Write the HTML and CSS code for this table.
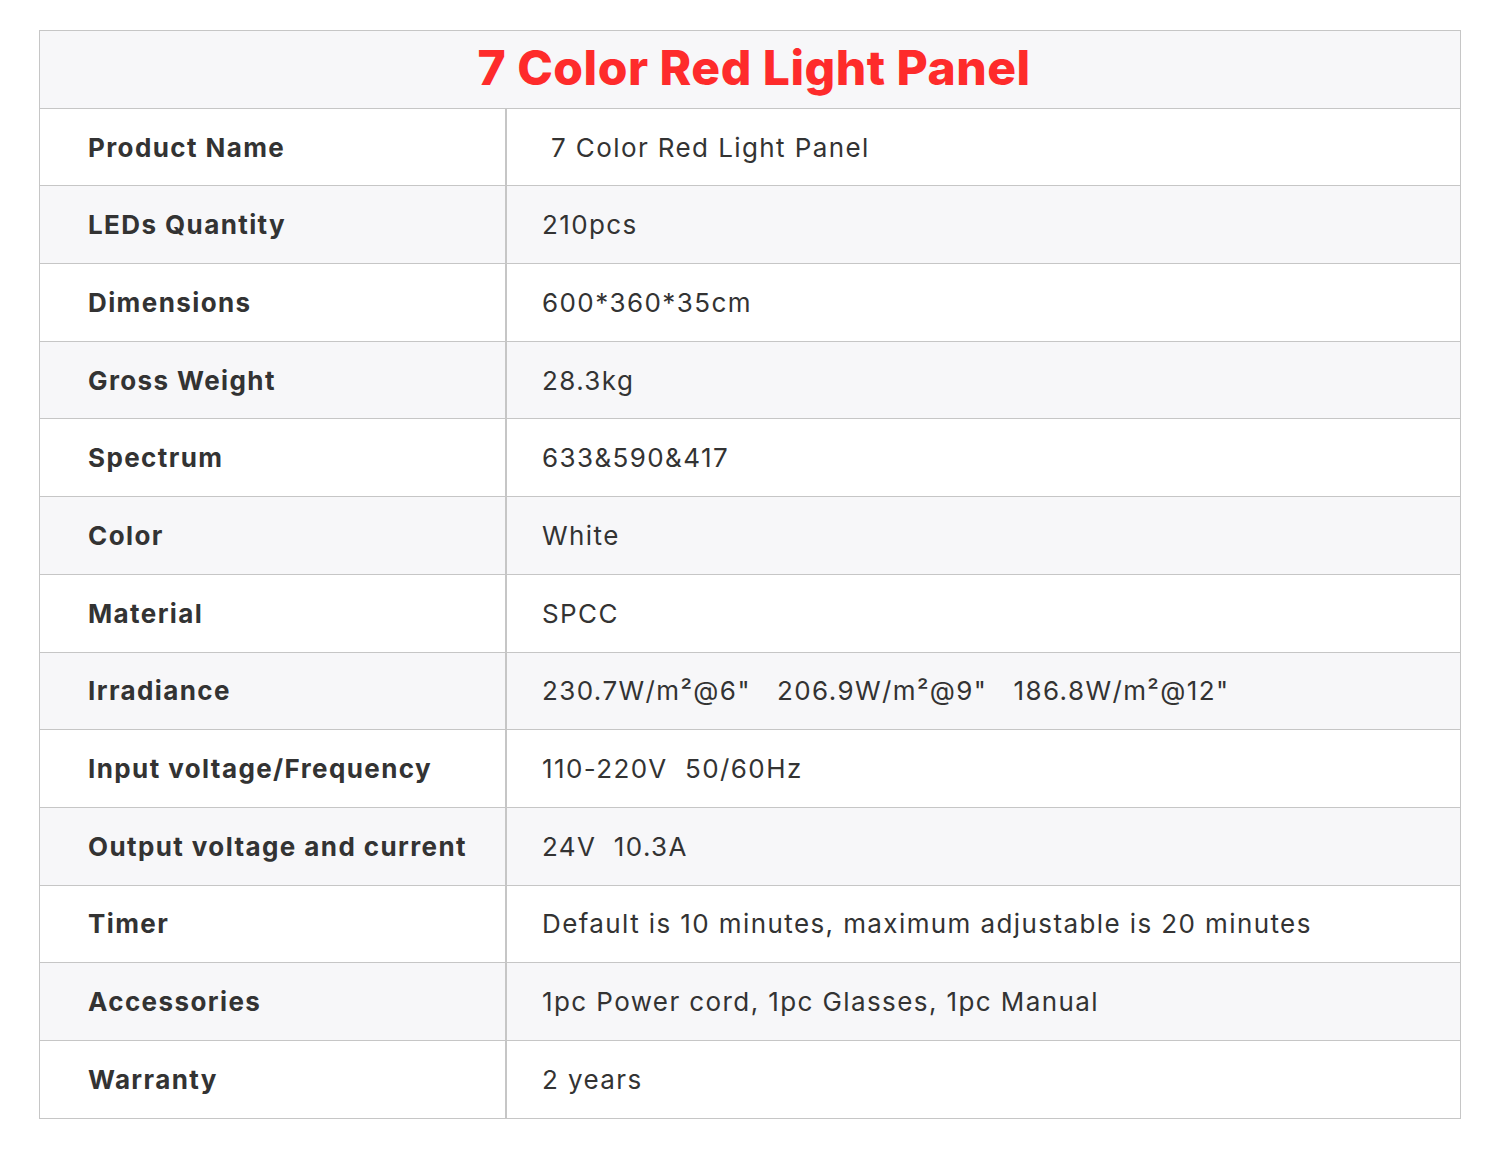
FILE: index.html
```html
<!DOCTYPE html>
<html>
<head>
<meta charset="utf-8">
<link rel="stylesheet" href="styles.css">
</head>
<body>
<div class="page">
  <table class="spec">
    <thead>
      <tr><th colspan="2" class="title">7 Color Red Light Panel</th></tr>
    </thead>
    <tbody>
      <tr><td class="k">Product Name</td><td class="v first">7 Color Red Light Panel</td></tr>
      <tr><td class="k">LEDs Quantity</td><td class="v">210pcs</td></tr>
      <tr><td class="k">Dimensions</td><td class="v">600*360*35cm</td></tr>
      <tr><td class="k">Gross Weight</td><td class="v">28.3kg</td></tr>
      <tr><td class="k">Spectrum</td><td class="v">633&amp;590&amp;417</td></tr>
      <tr><td class="k">Color</td><td class="v">White</td></tr>
      <tr><td class="k">Material</td><td class="v">SPCC</td></tr>
      <tr><td class="k">Irradiance</td><td class="v">230.7W/m²@6"&nbsp;&nbsp;&nbsp;206.9W/m²@9"&nbsp;&nbsp;&nbsp;186.8W/m²@12"</td></tr>
      <tr><td class="k">Input voltage/Frequency</td><td class="v">110-220V&nbsp;&nbsp;50/60Hz</td></tr>
      <tr><td class="k">Output voltage and current</td><td class="v">24V&nbsp;&nbsp;10.3A</td></tr>
      <tr><td class="k">Timer</td><td class="v">Default is 10 minutes, maximum adjustable is 20 minutes</td></tr>
      <tr><td class="k">Accessories</td><td class="v">1pc Power cord, 1pc Glasses, 1pc Manual</td></tr>
      <tr><td class="k">Warranty</td><td class="v">2 years</td></tr>
    </tbody>
  </table>
</div>
</body>
</html>
```

FILE: styles.css
```css
html, body {
  margin: 0;
  padding: 0;
  background: #ffffff;
}
.page {
  padding: 30px 39px 0 39px;
  font-family: "Inter", "Open Sans", sans-serif;
  color: #333333;
}
.spec {
  width: 1422px;
  border-collapse: collapse;
  border: 1px solid #c6c6c6;
}
.spec th,
.spec td {
  border: 1px solid #c6c6c6;
  height: 76.7px;
  padding: 0;
  vertical-align: middle;
}
.spec th.title {
  height: 72.7px;
  padding: 0 0 4px 8px;
  background: #f7f7f9;
  color: #fe2b2b;
  font-size: 48px;
  font-weight: 800;
  text-align: center;
  letter-spacing: 0.5px;
}
.spec tbody tr:nth-child(even) td {
  background: #f7f7f9;
}
.k {
  width: 417px;
  padding-left: 48px !important;
  font-size: 26px;
  font-weight: 700;
  letter-spacing: 1.4px;
  border-right: 2px solid #c6c6c6 !important;
}
.v {
  padding-left: 35px !important;
  font-size: 26px;
  font-weight: 400;
  letter-spacing: 1.4px;
}
.v.first {
  padding-left: 44px !important;
}
```
